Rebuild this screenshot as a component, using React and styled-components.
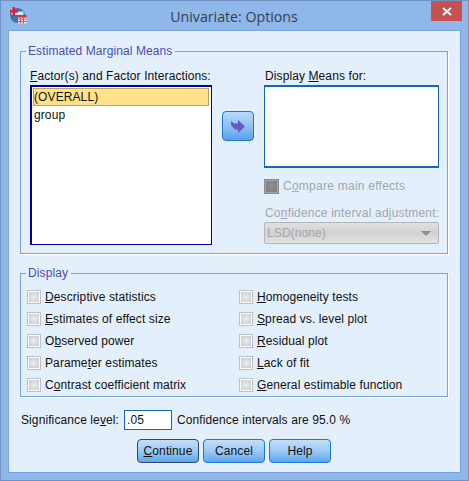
import styled, { createGlobalStyle } from 'styled-components';

const GlobalStyle = createGlobalStyle`
  html, body { margin: 0; padding: 0; background: #8fb7e9; }
  body { font-family: "Liberation Sans", Arial, sans-serif; font-size: 12px; letter-spacing: .1px; color: #111; }
  u { text-underline-offset: 1px; }
`;

const Window = styled.div`
  width: 469px;
  height: 481px;
  box-sizing: border-box;
  border: 1px solid #6f93c4;
  background: #8fb7e9;
  display: flex;
  flex-direction: column;
`;

const TitleBar = styled.div`
  height: 29px;
  flex: none;
  display: flex;
  align-items: flex-start;
  justify-content: space-between;
  padding: 0 6px 0 9px;
`;

const AppIcon = styled.svg`
  width: 17px;
  height: 17px;
  margin-top: 6px;
`;

const Title = styled.div`
  font-family: "Open Sans", "Noto Sans", sans-serif;
  font-size: 14.2px;
  letter-spacing: 0;
  line-height: 31px;
  color: #35414f;
  margin-left: 10px;
`;

const CloseButton = styled.div`
  width: 31px;
  height: 20px;
  background: #c75050;
  display: flex;
  align-items: center;
  justify-content: center;
`;

const Client = styled.div`
  flex: 1;
  margin: 0 7px 7px;
  box-sizing: border-box;
  border: 1px solid #7ba3d3;
  background: #e3effb;
  padding: 13px 12px 0 11px;
`;

const Group = styled.fieldset`
  margin: 0;
  padding: 0;
  min-width: 0;
  height: ${(p) => p.$height}px;
  margin-bottom: ${(p) => p.$gap || 0}px;
  box-sizing: border-box;
  border: 1px solid #7ba3d3;
  box-shadow: 1px 1px 0 #fff;
`;

const GroupTitle = styled.legend`
  margin-left: 5px;
  padding: 0 3px 0 2px;
  color: #4a4fae;
  font-size: 12px;
  line-height: 14px;
`;

const MeansGrid = styled.div`
  display: grid;
  grid-template-columns: 182px 32px 175px;
  column-gap: 10px;
  padding: 11px 0 0 9px;
`;

const Column = styled.div`
  display: flex;
  flex-direction: column;
`;

const FieldLabel = styled.div`
  line-height: 14px;
  margin-bottom: 2px;
  padding-left: ${(p) => p.$indent || 0}px;
  margin-top: ${(p) => p.$top || 0}px;
  white-space: nowrap;
  letter-spacing: ${(p) => (p.$disabled ? '.2px' : '.1px')};
  color: ${(p) => (p.$disabled ? '#a3a6ab' : '#111')};
`;

const ListBox = styled.div`
  height: ${(p) => p.$height}px;
  box-sizing: border-box;
  background: #fff;
  border-style: solid;
  border-color: ${(p) => (p.$strong ? '#0000a0' : '#1565b8')};
  border-width: ${(p) => (p.$strong ? '2px 1px 1px 2px' : '2px 1px 2px 1px')};
  padding: 1px 2px 1px 1px;
`;

const ListItem = styled.div`
  height: 18px;
  box-sizing: border-box;
  line-height: 17px;
  padding-left: 1px;
  margin-bottom: 1px;
  ${(p) => p.$selected && 'background: #ffe28a; border: 1px solid #bda45c; line-height: 16px; padding-left: 0;'}
`;

const MoveButton = styled.div`
  width: 32px;
  height: 30px;
  box-sizing: border-box;
  margin-top: 42px;
  border: 1px solid #1a78d6;
  border-radius: 4px;
  background: linear-gradient(#b9d9f9, #8fc1f3 50%, #57a0ea);
  display: flex;
  align-items: center;
  justify-content: center;
`;

const CheckRow = styled.div`
  display: flex;
  align-items: center;
  height: 22px;
  gap: 4px;
  margin-top: ${(p) => p.$top || 0}px;
  letter-spacing: ${(p) => (p.$disabled ? '.25px' : '.1px')};
  color: ${(p) => (p.$disabled ? '#a3a6ab' : '#111')};
`;

const CheckBox = styled.span`
  width: ${(p) => (p.$disabled ? 15 : 14)}px;
  height: ${(p) => (p.$disabled ? 15 : 14)}px;
  flex: none;
  box-sizing: border-box;
  border: 1px solid ${(p) => (p.$disabled ? '#8a8a8a' : '#b9c1c9')};
  box-shadow: inset 0 0 0 1px ${(p) => (p.$disabled ? '#a6a6a6' : '#fbfbfb')};
  background: ${(p) =>
    p.$disabled
      ? 'radial-gradient(#8f8f8f, #7c7c7c)'
      : 'radial-gradient(#ededed, #bfc2c5)'};
`;

const Dropdown = styled.div`
  height: 22px;
  box-sizing: border-box;
  border: 1px solid #b5b5b5;
  border-radius: 2px;
  background: linear-gradient(#e0e0e0, #d2d2d2 50%, #e2e2e2);
  color: #a3a6ab;
  display: flex;
  align-items: center;
  justify-content: space-between;
  padding: 0 7px 0 2px;
`;

const DropdownArrow = styled.span`
  width: 0;
  height: 0;
  border-left: 5px solid transparent;
  border-right: 5px solid transparent;
  border-top: 5px solid #8f8f8f;
`;

const DisplayGrid = styled.div`
  display: grid;
  grid-template-columns: 212px 1fr;
  padding: 6px 0 0 6px;
`;

const SignificanceRow = styled.div`
  display: flex;
  align-items: center;
  height: 20px;
  margin-top: 13px;
  padding-left: 1px;
`;

const LevelInput = styled.div`
  width: 48px;
  height: 20px;
  box-sizing: border-box;
  border: 1px solid #1565b8;
  background: #fff;
  margin: 0 5px 0 5px;
  padding-left: 2px;
  line-height: 18px;
`;

const Actions = styled.div`
  display: flex;
  gap: 4px;
  margin-top: 9px;
  padding-left: 117px;
`;

const ActionButton = styled.div`
  width: 62px;
  height: 24px;
  box-sizing: border-box;
  border: 1px solid ${(p) => (p.$default ? '#2a4a6a' : '#1a78d6')};
  border-radius: 4px;
  background: linear-gradient(#c3def9, #9ccaf6 50%, #5ea5ec);
  text-align: center;
  line-height: 22px;
`;

const effectsLeft = [
  [<><u>D</u>escriptive statistics</>, 'd'],
  [<><u>E</u>stimates of effect size</>, 'e'],
  [<>O<u>b</u>served power</>, 'o'],
  [<>Parame<u>t</u>er estimates</>, 'p'],
  [<>C<u>o</u>ntrast coefficient matrix</>, 'c'],
];

const effectsRight = [
  [<><u>H</u>omogeneity tests</>, 'h'],
  [<><u>S</u>pread vs. level plot</>, 's'],
  [<><u>R</u>esidual plot</>, 'r'],
  [<><u>L</u>ack of fit</>, 'l'],
  [<><u>G</u>eneral estimable function</>, 'g'],
];

function App() {
  return (
    <>
      <GlobalStyle />
      <Window>
        <TitleBar>
          <AppIcon viewBox="0 0 17 17">
            <circle cx="7.5" cy="8.5" r="7.5" fill="#3a78ad" />
            <path d="M1.5 4.5h12v3.5h-12z" fill="#d5e6f3" />
            <path d="M2.5 0h2.5v3h3v2.5h-3V9H2.5V5.5h-2.500V3h2.500z" fill="#d8213a" />
            <rect x="8" y="8" width="8.500" height="8.500" fill="#f6dfe3" />
            <rect x="8" y="8" width="8.500" height="2.500" fill="#c9304a" />
            <path d="M8 12h8.500M8 14.500h8.500M10.500 10v6.500M13.500 10v6.500" stroke="#d0566c" strokeWidth="1" />
          </AppIcon>
          <Title>Univariate: Options</Title>
          <CloseButton>
            <svg width="10" height="9" viewBox="0 0 10 9">
              <path d="M1 1l8 7M9 1L1 8" stroke="#fff" strokeWidth="2" />
            </svg>
          </CloseButton>
        </TitleBar>
        <Client>
          <Group $height={210} $gap={12}>
            <GroupTitle>Estimated Marginal Means</GroupTitle>
            <MeansGrid>
              <Column>
                <FieldLabel><u>F</u>actor(s) and Factor Interactions:</FieldLabel>
                <ListBox $height={160} $strong>
                  <ListItem $selected>(OVERALL)</ListItem>
                  <ListItem>group</ListItem>
                </ListBox>
              </Column>
              <MoveButton>
                <svg width="14" height="13" viewBox="0 0 14 13">
                  <path d="M7 0l7 6.500L7 13V9.500H4L0 5V1l3 2.500h4z" fill="#6459c8" />
                </svg>
              </MoveButton>
              <Column>
                <FieldLabel $indent={1}>Display <u>M</u>eans for:</FieldLabel>
                <ListBox $height={83} />
                <CheckRow $disabled $top={7}>
                  <CheckBox $disabled />
                  <span>C<u>o</u>mpare main effects</span>
                </CheckRow>
                <FieldLabel $disabled $indent={1} $top={9}>Co<u>n</u>fidence interval adjustment:</FieldLabel>
                <Dropdown>
                  <span>LSD(none)</span>
                  <DropdownArrow />
                </Dropdown>
              </Column>
            </MeansGrid>
          </Group>
          <Group $height={131}>
            <GroupTitle>Display</GroupTitle>
            <DisplayGrid>
              <Column>
                {effectsLeft.map(([label, key]) => (
                  <CheckRow key={key}>
                    <CheckBox />
                    <span>{label}</span>
                  </CheckRow>
                ))}
              </Column>
              <Column>
                {effectsRight.map(([label, key]) => (
                  <CheckRow key={key}>
                    <CheckBox />
                    <span>{label}</span>
                  </CheckRow>
                ))}
              </Column>
            </DisplayGrid>
          </Group>
          <SignificanceRow>
            <span>Significance le<u>v</u>el:</span>
            <LevelInput>.05</LevelInput>
            <span>Confidence intervals are 95.0 %</span>
          </SignificanceRow>
          <Actions>
            <ActionButton $default><u>C</u>ontinue</ActionButton>
            <ActionButton>Cancel</ActionButton>
            <ActionButton>Help</ActionButton>
          </Actions>
        </Client>
      </Window>
    </>
  );
}

export default App;
